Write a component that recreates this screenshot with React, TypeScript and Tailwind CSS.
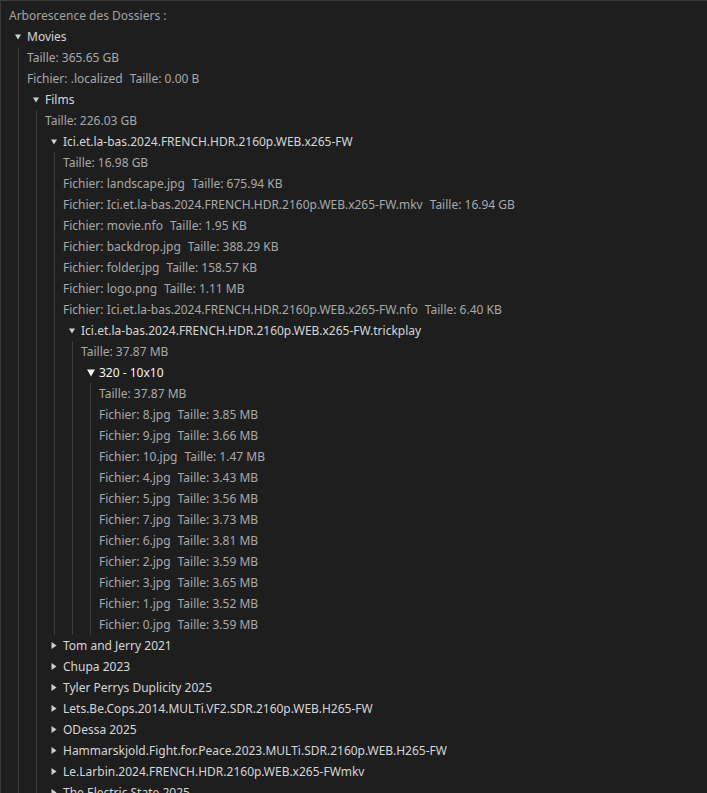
import React from "react";

type Node =
  | { kind: "info"; text: string }
  | { kind: "file"; name: string; size: string }
  | { kind: "dir"; name: string; open?: boolean; hot?: boolean; children?: Node[] };

const info = (text: string): Node => ({ kind: "info", text });
const file = (name: string, size: string): Node => ({ kind: "file", name, size });
const dir = (name: string, children?: Node[], hot?: boolean): Node => ({
  kind: "dir",
  name,
  open: !!children,
  hot,
  children,
});

const tree: Node = dir("Movies", [
  info("Taille: 365.65 GB"),
  file(".localized", "0.00 B"),
  dir("Films", [
    info("Taille: 226.03 GB"),
    dir("Ici.et.la-bas.2024.FRENCH.HDR.2160p.WEB.x265-FW", [
      info("Taille: 16.98 GB"),
      file("landscape.jpg", "675.94 KB"),
      file("Ici.et.la-bas.2024.FRENCH.HDR.2160p.WEB.x265-FW.mkv", "16.94 GB"),
      file("movie.nfo", "1.95 KB"),
      file("backdrop.jpg", "388.29 KB"),
      file("folder.jpg", "158.57 KB"),
      file("logo.png", "1.11 MB"),
      file("Ici.et.la-bas.2024.FRENCH.HDR.2160p.WEB.x265-FW.nfo", "6.40 KB"),
      dir("Ici.et.la-bas.2024.FRENCH.HDR.2160p.WEB.x265-FW.trickplay", [
        info("Taille: 37.87 MB"),
        dir(
          "320 - 10x10",
          [
            info("Taille: 37.87 MB"),
            file("8.jpg", "3.85 MB"),
            file("9.jpg", "3.66 MB"),
            file("10.jpg", "1.47 MB"),
            file("4.jpg", "3.43 MB"),
            file("5.jpg", "3.56 MB"),
            file("7.jpg", "3.73 MB"),
            file("6.jpg", "3.81 MB"),
            file("2.jpg", "3.59 MB"),
            file("3.jpg", "3.65 MB"),
            file("1.jpg", "3.52 MB"),
            file("0.jpg", "3.59 MB"),
          ],
          true
        ),
      ]),
    ]),
    dir("Tom and Jerry 2021"),
    dir("Chupa 2023"),
    dir("Tyler Perrys Duplicity 2025"),
    dir("Lets.Be.Cops.2014.MULTi.VF2.SDR.2160p.WEB.H265-FW"),
    dir("ODessa 2025"),
    dir("Hammarskjold.Fight.for.Peace.2023.MULTi.SDR.2160p.WEB.H265-FW"),
    dir("Le.Larbin.2024.FRENCH.HDR.2160p.WEB.x265-FWmkv"),
    dir("The Electric State 2025"),
  ]),
]);

function Arrow({ open, hot }: { open?: boolean; hot?: boolean }) {
  if (hot) {
    return (
      <svg width="8" height="8" viewBox="0 0 8 8" className="ml-[6px] mr-[4px] shrink-0">
        <path d="M0 0.5 L8 0.5 L4 7.5 Z" fill="#f2f2f2" />
      </svg>
    );
  }
  if (open) {
    return (
      <svg width="6" height="6" viewBox="0 0 6 6" className="ml-[6px] mr-[6px] shrink-0">
        <path d="M0 0.5 L6 0.5 L3 5.5 Z" fill="#cfcfcf" />
      </svg>
    );
  }
  return (
    <svg width="6" height="7" viewBox="0 0 6 7" className="ml-[6px] mr-[6px] shrink-0">
      <path d="M0.5 0 L5.5 3.5 L0.5 7 Z" fill="#cfcfcf" />
    </svg>
  );
}

function TreeNode({ node }: { node: Node }) {
  if (node.kind === "info") {
    return <div className="h-[21px] flex items-center text-[#a9a9a9] whitespace-nowrap">{node.text}</div>;
  }
  if (node.kind === "file") {
    return (
      <div className="h-[21px] flex items-center text-[#a9a9a9] whitespace-nowrap">
        <span>Fichier: {node.name}</span>
        <span className="ml-[7px]">Taille: {node.size}</span>
      </div>
    );
  }
  return (
    <div>
      <div
        className={
          "h-[21px] flex items-center whitespace-nowrap " +
          (node.hot ? "text-[#f4f4f4]" : "text-[#d6d6d6]")
        }
      >
        <Arrow open={node.open} hot={node.hot} />
        <span>{node.name}</span>
      </div>
      {node.open && node.children && (
        <div className="ml-[9px] border-l border-[#3c3c3c] pl-[8px]">
          {node.children.map((c, i) => (
            <TreeNode key={i} node={c} />
          ))}
        </div>
      )}
    </div>
  );
}

export default function App() {
  return (
    <div className="w-[707px] h-[793px] overflow-hidden bg-[#1e1e1e]">
      <div
        className="border-t border-l border-[#3a3a3a] pl-[8px] pt-[4px] text-[12px] min-h-full"
        style={{ fontFamily: "'Noto Sans', 'Open Sans', sans-serif" }}
      >
        <div className="h-[21px] flex items-center text-[#a3a3a3] whitespace-nowrap">
          Arborescence des Dossiers :
        </div>
        <TreeNode node={tree} />
      </div>
    </div>
  );
}
